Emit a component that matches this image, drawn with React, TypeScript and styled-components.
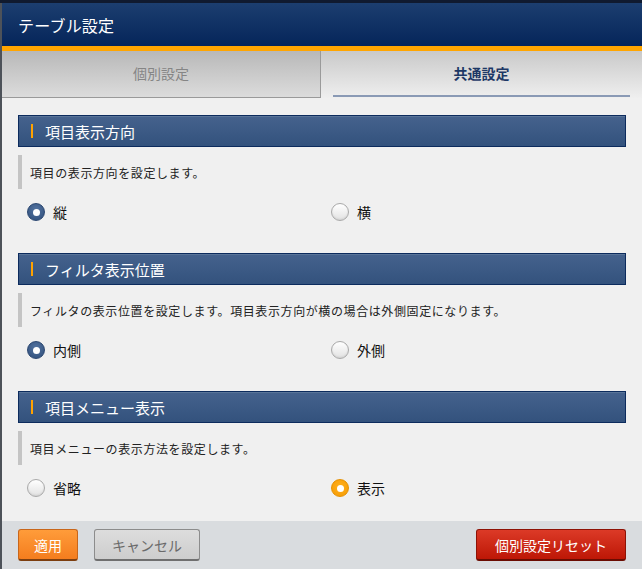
import React, { useState } from "react";
import styled, { createGlobalStyle, css } from "styled-components";

const Global = createGlobalStyle`
  html, body { margin: 0; padding: 0; }
  body {
    background: #50555c;
    font-family: "Noto Sans CJK JP", "Noto Sans", sans-serif;
    -webkit-font-smoothing: antialiased;
  }
  * { box-sizing: border-box; }
`;

const Page = styled.div`
  width: 642px;
  height: 569px;
  border-top: 3px solid #101a2f;
  padding-left: 2px;
  background: #4d5259;
  overflow: hidden;
`;

const Dialog = styled.div`
  width: 640px;
  height: 566px;
  display: flex;
  flex-direction: column;
  background: #f0f0f0;
`;

const Header = styled.div`
  height: 48px;
  flex: none;
  display: flex;
  align-items: center;
  padding-left: 16px;
  background: linear-gradient(#1c3e6f, #05255a);
  border-bottom: 5px solid #ffa500;
  color: #fff;
  font-size: 16px;
  letter-spacing: 0.2px;
`;

const Tabs = styled.div`
  height: 47px;
  flex: none;
  display: flex;
`;

const Tab = styled.div<{ $active?: boolean }>`
  display: flex;
  font-size: 14px;
  ${(p) =>
    p.$active
      ? css`
          flex: 1;
          padding: 0 12px 1px;
          background: linear-gradient(#c9c9c9, #efefef);
          color: #1d3866;
          font-weight: bold;
        `
      : css`
          width: 319px;
          background: linear-gradient(#b8b8b8, #dcdcdc);
          border-right: 1px solid #9a9a9a;
          border-bottom: 1px solid #9a9a9a;
          color: #858585;
        `}
`;

const TabLabel = styled.span<{ $active?: boolean }>`
  flex: 1;
  display: flex;
  align-items: center;
  justify-content: center;
  border-bottom: 2px solid ${(p) => (p.$active ? "#8a9ab5" : "transparent")};
`;

const Content = styled.div`
  flex: 1;
  padding: 17px 16px 0;
  display: flex;
  flex-direction: column;
  gap: 31px;
`;

const Section = styled.section`
  display: flex;
  flex-direction: column;
`;

const SectionHeader = styled.div`
  height: 32px;
  display: flex;
  align-items: center;
  gap: 12px;
  padding-left: 12px;
  border: 1px solid #0c2b5d;
  background: linear-gradient(#45628d, #33527d);
  box-shadow: inset 0 1px 0 #5a7599;
  color: #fff;
  font-size: 15px;
`;

const Accent = styled.span`
  width: 2px;
  height: 14px;
  background: #ffa200;
`;

const Description = styled.div`
  margin-top: 8px;
  height: 34px;
  display: flex;
  align-items: center;
  border-left: 4px solid #c4c4c4;
  padding-left: 8px;
  font-size: 12px;
  letter-spacing: 0.6px;
  color: #222;
`;

const Options = styled.div`
  margin-top: 13px;
  height: 20px;
  display: grid;
  grid-template-columns: 1fr 1fr;
`;

const Option = styled.label`
  display: flex;
  align-items: center;
  gap: 8px;
  padding-left: 9px;
  font-size: 14px;
  color: #111;
  cursor: pointer;
`;

const RadioDot = styled.span<{ $checked?: boolean; $tone?: "blue" | "orange" }>`
  width: 18px;
  height: 18px;
  border-radius: 50%;
  display: flex;
  align-items: center;
  justify-content: center;
  ${(p) =>
    p.$checked
      ? css`
          background: ${p.$tone === "orange"
            ? "radial-gradient(circle at 50% 40%, #ffb020, #f59a00)"
            : "radial-gradient(circle at 50% 35%, #5373a0, #2f4e7a)"};
          border: 1px solid ${p.$tone === "orange" ? "#e69000" : "#2a4670"};
          &::after {
            content: "";
            width: 7px;
            height: 7px;
            border-radius: 50%;
            background: #fff;
          }
        `
      : css`
          background: linear-gradient(#ffffff, #e2e2e2);
          border: 1px solid #a9a9a9;
          box-shadow: inset 0 -1px 2px rgba(0, 0, 0, 0.08);
        `}
`;

const Footer = styled.div`
  height: 48px;
  flex: none;
  display: flex;
  align-items: center;
  gap: 16px;
  padding: 0 16px;
  background: #d9dcdf;
`;

const Spacer = styled.div`
  flex: 1;
`;

const Button = styled.button<{ $variant: "apply" | "cancel" | "reset" }>`
  height: 32px;
  border-radius: 3px;
  font-family: inherit;
  font-size: 14px;
  cursor: pointer;
  ${(p) =>
    p.$variant === "apply"
      ? css`
          padding: 0 15px;
          background: linear-gradient(#ff9c3a, #f47d1e);
          border: 1px solid #c8661a;
          border-bottom: 2px solid #7d3f10;
          color: #fff;
        `
      : p.$variant === "cancel"
      ? css`
          padding: 0 17px;
          background: linear-gradient(#dddddd, #cdcdcd);
          border: 1px solid #8c8c8c;
          border-bottom: 2px solid #6f6f6f;
          color: #6a6a6a;
        `
      : css`
          padding: 0 18px;
          background: linear-gradient(#dc3a27, #bd1706);
          border: 1px solid #8e1205;
          border-bottom: 2px solid #6a0c02;
          color: #fff;
        `}
`;

type Sec = {
  title: string;
  desc: string;
  options: string[];
  tone: "blue" | "orange";
  initial: number;
};

const sections: Sec[] = [
  { title: "項目表示方向", desc: "項目の表示方向を設定します。", options: ["縦", "横"], tone: "blue", initial: 0 },
  {
    title: "フィルタ表示位置",
    desc: "フィルタの表示位置を設定します。項目表示方向が横の場合は外側固定になります。",
    options: ["内側", "外側"],
    tone: "blue",
    initial: 0,
  },
  { title: "項目メニュー表示", desc: "項目メニューの表示方法を設定します。", options: ["省略", "表示"], tone: "orange", initial: 1 },
];

export default function App() {
  const [values, setValues] = useState<number[]>(sections.map((s) => s.initial));
  return (
    <>
      <Global />
      <Page>
        <Dialog>
          <Header>テーブル設定</Header>
          <Tabs>
            <Tab>
              <TabLabel>個別設定</TabLabel>
            </Tab>
            <Tab $active>
              <TabLabel $active>共通設定</TabLabel>
            </Tab>
          </Tabs>
          <Content>
            {sections.map((s, si) => (
              <Section key={s.title}>
                <SectionHeader>
                  <Accent />
                  {s.title}
                </SectionHeader>
                <Description>{s.desc}</Description>
                <Options>
                  {s.options.map((o, oi) => (
                    <Option
                      key={o}
                      onClick={() => setValues((v) => v.map((x, i) => (i === si ? oi : x)))}
                    >
                      <RadioDot $checked={values[si] === oi} $tone={s.tone} />
                      {o}
                    </Option>
                  ))}
                </Options>
              </Section>
            ))}
          </Content>
          <Footer>
            <Button $variant="apply">適用</Button>
            <Button $variant="cancel">キャンセル</Button>
            <Spacer />
            <Button $variant="reset">個別設定リセット</Button>
          </Footer>
        </Dialog>
      </Page>
    </>
  );
}
